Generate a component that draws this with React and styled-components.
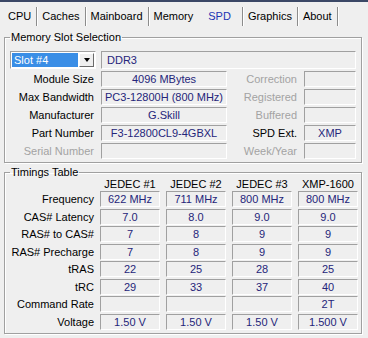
import React from "react";
import styled, { createGlobalStyle } from "styled-components";

const GlobalStyle = createGlobalStyle`
  html, body {
    margin: 0;
    padding: 0;
    background: #efefef;
  }
  body {
    font-family: "Liberation Sans", Arial, sans-serif;
    font-size: 11px;
    color: #000;
  }
`;

const Window = styled.div`
  width: 368px;
  height: 338px;
  box-sizing: border-box;
  border-top: 2px solid #3b4866;
  background: #efefef;
  overflow: hidden;
`;

const TabBar = styled.div`
  display: flex;
  align-items: center;
  height: 29px;
  padding-left: 4px;
`;

const Tab = styled.div`
  height: 19px;
  line-height: 19px;
  padding: ${(p) => (p.$active ? "0 11px 0 8px" : "0 5px 0 4px")};
  margin-right: 1px;
  color: ${(p) => (p.$active ? "#1c34b4" : "#000")};
  border-right: 1px solid ${(p) => (p.$hideSep ? "transparent" : "#8c8c8c")};
  box-shadow: ${(p) => (p.$hideSep ? "none" : "1px 0 0 #fff")};
`;

const Group = styled.fieldset`
  margin: ${(p) => p.$top || "0"} 6px 0 4px;
  padding: ${(p) => p.$padTop || "7px"} 3px 3px 5px;
  border: 1px solid #a0a0a0;
  box-shadow: inset 1px 1px 0 #fff, 1px 1px 0 #fff;
  min-width: 0;
`;

const Legend = styled.legend`
  padding: 0 1px;
  margin: 0;
  font-size: 11px;
  line-height: 13px;
`;

const SlotGrid = styled.div`
  display: grid;
  grid-template-columns: 84px 126px 63px 52px;
  grid-template-rows: 18px repeat(5, 16px);
  column-gap: 7px;
  row-gap: 2px;
`;

const TimingGrid = styled.div`
  display: grid;
  grid-template-columns: 84px repeat(4, 60px);
  grid-template-rows: 10.5px repeat(8, 16px);
  column-gap: 6px;
  row-gap: 1.5px;
`;

const Label = styled.div`
  display: flex;
  align-items: center;
  justify-content: flex-end;
  white-space: nowrap;
  color: ${(p) => (p.$disabled ? "#a3a3a3" : "#000")};
`;

const Head = styled.div`
  display: flex;
  align-items: center;
  justify-content: center;
  white-space: nowrap;
`;

const Field = styled.div`
  grid-column: ${(p) => p.$span || "auto"};
  box-sizing: border-box;
  height: 100%;
  border: 1px solid;
  border-color: #a0a0a0 #fff #fff #a0a0a0;
  display: flex;
  align-items: center;
  justify-content: ${(p) => (p.$left ? "flex-start" : "center")};
  padding: 0 5px;
  color: #25257a;
  white-space: nowrap;
  overflow: hidden;
`;

const Select = styled.div`
  width: 86px;
  height: 18px;
  box-sizing: border-box;
  border: 1px solid;
  border-color: #a0a0a0 #fff #fff #a0a0a0;
  background: #fff;
  padding: 1px;
  display: flex;
  gap: 1px;
`;

const SelectValue = styled.div`
  flex: 1;
  background: #3a8ee6;
  color: #fff;
  padding-left: 2px;
  line-height: 14px;
`;

const DropButton = styled.div`
  width: 15px;
  box-sizing: border-box;
  background: #efefef;
  border: 1px solid;
  border-color: #fff #6b6b6b #6b6b6b #fff;
  display: flex;
  align-items: center;
  justify-content: center;

  &::after {
    content: "";
    border-left: 3.5px solid transparent;
    border-right: 3.5px solid transparent;
    border-top: 4px solid #000;
  }
`;

const tabs = ["CPU", "Caches", "Mainboard", "Memory", "SPD", "Graphics", "About"];

const slotRows = [
  ["Module Size", "4096 MBytes", "Correction", "", false, true],
  ["Max Bandwidth", "PC3-12800H (800 MHz)", "Registered", "", false, true],
  ["Manufacturer", "G.Skill", "Buffered", "", false, true],
  ["Part Number", "F3-12800CL9-4GBXL", "SPD Ext.", "XMP", false, false],
  ["Serial Number", "", "Week/Year", "", true, true],
];

const timingCols = ["JEDEC #1", "JEDEC #2", "JEDEC #3", "XMP-1600"];

const timingRows = [
  ["Frequency", ["622 MHz", "711 MHz", "800 MHz", "800 MHz"]],
  ["CAS# Latency", ["7.0", "8.0", "9.0", "9.0"]],
  ["RAS# to CAS#", ["7", "8", "9", "9"]],
  ["RAS# Precharge", ["7", "8", "9", "9"]],
  ["tRAS", ["22", "25", "28", "25"]],
  ["tRC", ["29", "33", "37", "40"]],
  ["Command Rate", ["", "", "", "2T"]],
  ["Voltage", ["1.50 V", "1.50 V", "1.50 V", "1.500 V"]],
];

export default function App() {
  const active = tabs.indexOf("SPD");

  return (
    <>
      <GlobalStyle />
      <Window>
        <TabBar>
          {tabs.map((t, i) => (
            <Tab key={t} $active={i === active} $hideSep={i === active - 1}>
              {t}
            </Tab>
          ))}
        </TabBar>

        <Group>
          <Legend>Memory Slot Selection</Legend>
          <SlotGrid>
            <Select>
              <SelectValue>Slot #4</SelectValue>
              <DropButton />
            </Select>
            <Field $span="2 / 5" $left>
              DDR3
            </Field>
            {slotRows.map(([label, value, label2, value2, dis1, dis2]) => (
              <React.Fragment key={label}>
                <Label $disabled={dis1}>{label}</Label>
                <Field>{value}</Field>
                <Label $disabled={dis2}>{label2}</Label>
                <Field>{value2}</Field>
              </React.Fragment>
            ))}
          </SlotGrid>
        </Group>

        <Group $top="3px" $padTop="0">
          <Legend>Timings Table</Legend>
          <TimingGrid>
            <div />
            {timingCols.map((c) => (
              <Head key={c}>{c}</Head>
            ))}
            {timingRows.map(([label, values]) => (
              <React.Fragment key={label}>
                <Label>{label}</Label>
                {values.map((v, i) => (
                  <Field key={i}>{v}</Field>
                ))}
              </React.Fragment>
            ))}
          </TimingGrid>
        </Group>
      </Window>
    </>
  );
}
